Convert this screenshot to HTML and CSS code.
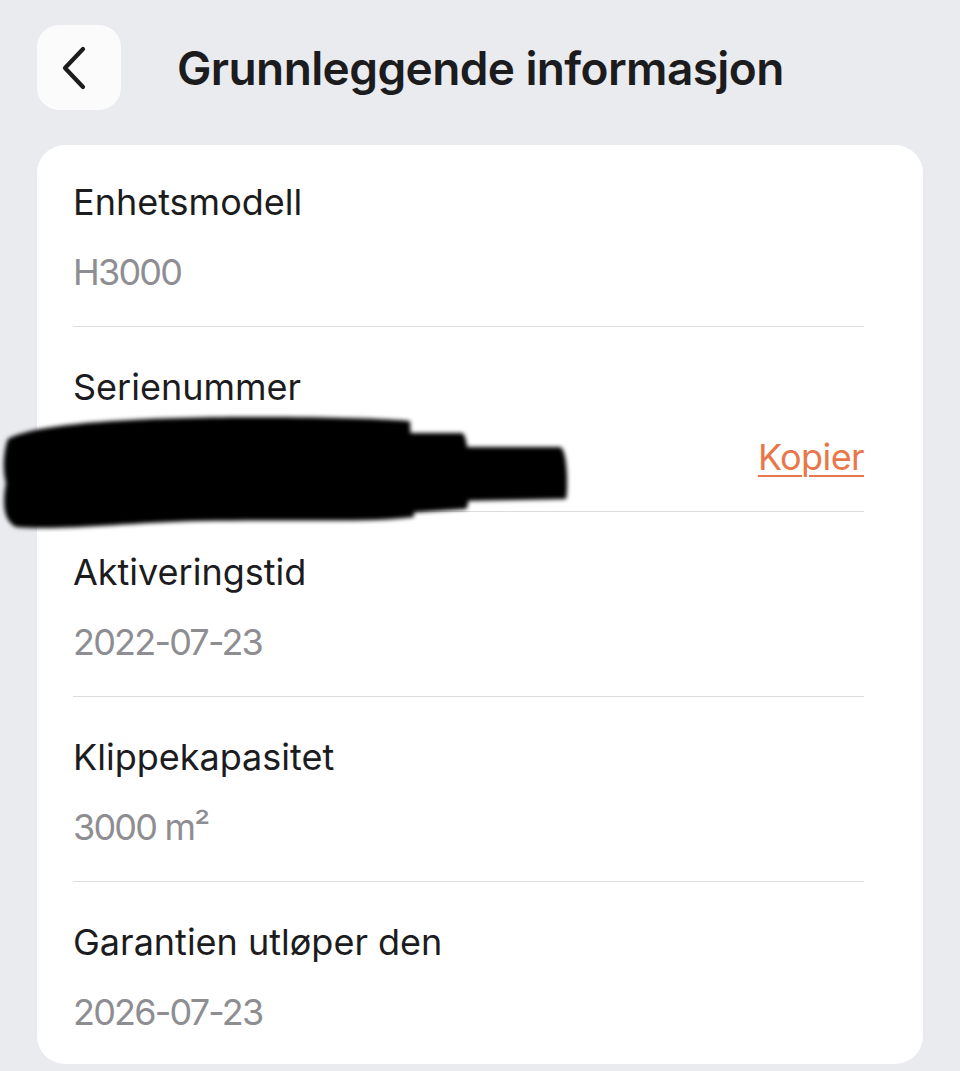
FILE: index.html
```html
<!DOCTYPE html>
<html lang="no">
<head>
    <meta charset="UTF-8">
    <meta name="viewport" content="width=device-width, initial-scale=1.0">
    <title>Grunnleggende informasjon</title>
    <link rel="stylesheet" href="styles.css">
</head>
<body>
    <div class="header">
        <div class="back">
            <svg width="30" height="46" viewBox="0 0 30 46">
                <path d="M24 4 L6 23 L24 42" fill="none" stroke="#1c1c1e" stroke-width="4.2" stroke-linecap="round" stroke-linejoin="round"/>
            </svg>
        </div>
        <h1 class="title">Grunnleggende informasjon</h1>
    </div>

    <div class="card">
        <div class="row">
            <div class="label">Enhetsmodell</div>
            <div class="value">H3000</div>
        </div>
        <div class="row">
            <div class="label">Serienummer</div>
            <div class="value serial">
                <span class="hidden">XXXXXXXXXXXX</span>
                <a class="copy" href="#">Kopier</a>
            </div>
            <!-- scribbled out serial number -->
            <svg class="scribble" width="580" height="124" viewBox="0 0 580 124">
                <defs>
                    <filter id="soft"><feGaussianBlur stdDeviation="2"/></filter>
                </defs>
                <g filter="url(#soft)" fill="#050505">
                    <path d="M8 26 C40 8 160 4 260 4 C330 4 390 6 410 8 L414 104 C370 110 300 106 200 108 C120 110 60 118 16 114 C4 108 2 92 6 70 C2 56 4 36 8 26 Z"/>
                    <path d="M404 20 L462 20 C470 22 472 90 466 96 L406 100 Z"/>
                    <path d="M460 34 L560 34 C568 36 568 80 566 86 L460 88 Z"/>
                </g>
            </svg>
        </div>
        <div class="row">
            <div class="label">Aktiveringstid</div>
            <div class="value">2022-07-23</div>
        </div>
        <div class="row">
            <div class="label">Klippekapasitet</div>
            <div class="value">3000 m²</div>
        </div>
        <div class="row last">
            <div class="label">Garantien utløper den</div>
            <div class="value">2026-07-23</div>
        </div>
    </div>
</body>
</html>
```

FILE: styles.css
```css
body{
    margin:0;
    padding:0;
    background-color:#e9ebef;
    font-family:Inter, "Liberation Sans", sans-serif;
    color:#1c1c1e;
}
.header{
    display:flex;
    align-items:center;
    padding:25px 37px 0 37px;
    height:85px;
}
.back{
    width:84px;
    height:85px;
    background:#fbfbfc;
    border-radius:22px;
    display:flex;
    align-items:center;
    justify-content:center;
    margin-right:56px;
}
.back svg{
    margin-left:-10px;
}
.title{
    margin:0;
    font-size:46px;
    font-weight:600;
    letter-spacing:-0.6px;
}
.card{
    position:relative;
    margin:35px 37px 0 37px;
    background:#fff;
    border-radius:28px;
    padding:0 59px 0 36px;
}
.row{
    position:relative;
    padding:38px 0 32px 0;
    border-bottom:1px solid #dcdcdf;
}
.row:first-child{
    padding-top:35px;
}
.row.last{
    border-bottom:none;
    padding-bottom:30px;
}
.label,
.value{
    font-size:36px;
    line-height:44px;
}
.label{
    margin-bottom:26px;
}
.value{
    color:#8e8e92;
    letter-spacing:-1.8px;
}
.serial{
    display:flex;
    justify-content:space-between;
}
.hidden{
    visibility:hidden;
}
.copy{
    color:#e8784a;
    letter-spacing:-0.6px;
    text-decoration:underline;
    text-underline-offset:5px;
    text-decoration-thickness:2px;
}
.scribble{
    position:absolute;
    left:-73px;
    top:86px;
}
```
